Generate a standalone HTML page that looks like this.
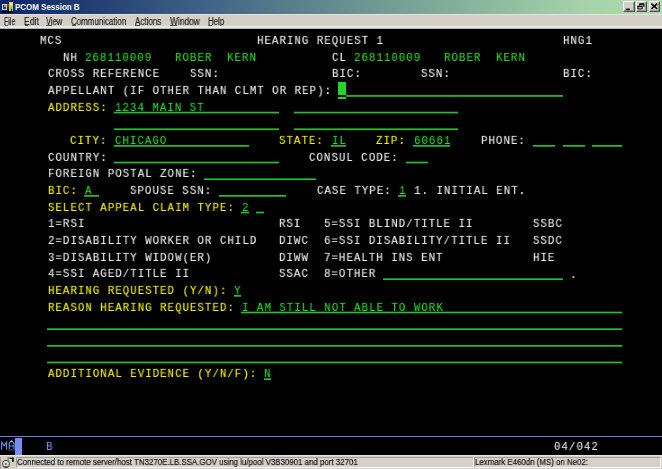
<!DOCTYPE html>
<html><head><meta charset="utf-8"><style>
html,body{margin:0;padding:0;}
body{width:662px;height:469px;overflow:hidden;position:relative;background:#000;font-family:"Liberation Sans",sans-serif;}
div{box-sizing:border-box;}
#title{position:absolute;left:0;top:0;width:662px;height:13.6px;
background:linear-gradient(to right,rgb(10,36,106) 0px,rgb(35,65,115) 100px,rgb(65,100,135) 210px,rgb(105,145,145) 350px,rgb(135,180,155) 470px,rgb(165,210,170) 580px,rgb(172,222,175) 662px);}
#ttext{position:absolute;left:15px;top:1.2px;color:#fff;font-weight:bold;font-size:9px;line-height:12px;white-space:nowrap;transform-origin:0 0;}
.btn{position:absolute;top:1.2px;width:11.5px;height:11px;background:#d4d0c8;
border-top:1px solid #fff;border-left:1px solid #fff;border-right:1px solid #505050;border-bottom:1px solid #505050;box-shadow:inset -1px -1px 0 #9a9a9a;}
#menu{position:absolute;left:0;top:13.6px;width:662px;height:15.4px;background:#d4d0c8;border-top:1.4px solid #e4e2dc;}
#menub{position:absolute;left:0;top:26.4px;width:662px;height:2.6px;background:linear-gradient(#e8e6e0,#e8e6e0 55%,#9a988f);}
.mi{position:absolute;will-change:transform;font-size:10px;line-height:12px;color:#202020;-webkit-text-stroke:0.2px #202020;white-space:nowrap;transform-origin:0 0;}
.mi u{text-decoration-thickness:1px;text-underline-offset:1px;}
.t{position:absolute;will-change:transform;transform:scale(var(--sx),0.9);transform-origin:0 0;--sx:0.9;--sw:0.1px;font-family:"Liberation Mono",monospace;font-size:12.0px;line-height:16px;letter-spacing:1.102px;white-space:pre;-webkit-text-stroke-width:var(--sw);}
.u{position:absolute;}
#status{position:absolute;left:0;top:454.5px;width:662px;height:14.5px;background:#d4d0c8;border-top:1px solid #e6e4de;}
.panel{position:absolute;top:1px;height:11px;border-top:1px solid #a09e96;border-left:1px solid #a09e96;border-right:1px solid #fff;border-bottom:1px solid #fff;}
.st{position:absolute;will-change:transform;top:1.4px;font-size:9px;line-height:11px;color:#0a0a14;-webkit-text-stroke:0.15px #0a0a14;white-space:nowrap;transform-origin:0 0;}
</style></head><body>
<div id="title">
<svg width="16" height="14" style="position:absolute;left:0;top:0" shape-rendering="crispEdges">
<rect x="1.5" y="3.5" width="5" height="6" fill="#d8ccb0"/>
<rect x="2.5" y="4.5" width="3" height="4" fill="#2040d0"/>
<rect x="3.5" y="4.5" width="2" height="2" fill="#30c060"/>
<rect x="6.5" y="4.2" width="2.5" height="2.4" fill="#d01818"/>
<rect x="9" y="2" width="4" height="9" fill="#d8d040"/>
<rect x="10" y="3" width="2" height="2" fill="#f0f0a0"/>
<rect x="10" y="6.5" width="2" height="2" fill="#70d070"/>
<rect x="10.5" y="9" width="1.5" height="2" fill="#101010"/>
<rect x="2" y="11" width="11" height="1.6" fill="#000"/>
</svg>
<div id="ttext" style="transform:scaleX(0.885)">PCOM Session B</div>
<div class="btn" style="left:623.2px"><svg width="12" height="12" style="position:absolute;left:-1px;top:-1px"><rect x="2.8" y="7.6" width="4.2" height="1.5" fill="#000"/></svg></div>
<div class="btn" style="left:635.6px"><svg width="12" height="12" style="position:absolute;left:-1px;top:-1px" fill="none" stroke="#000">
<path d="M3.6 3.1 H7.9 V6 M3.6 3.1 V4.6" stroke-width="1" />
<rect x="3.1" y="2.4" width="5.2" height="1.3" fill="#000" stroke="none"/>
<rect x="1.9" y="5.3" width="4.2" height="2.6" fill="#d4d0c8" stroke-width="0.9"/>
<rect x="1.5" y="4.8" width="5" height="1.3" fill="#000" stroke="none"/>
</svg></div>
<div class="btn" style="left:648.8px"><svg width="12" height="12" style="position:absolute;left:-1px;top:-1px"><path d="M2.4 2.6 L8.2 8.0 M8.2 2.6 L2.4 8.0" stroke="#000" stroke-width="1.6"/></svg></div>
</div>
<div id="menu">
<div style="position:absolute;left:4.5px;top:10.6px;width:3.7px;height:1px;background:#505050"></div><div class="mi" style="left:4.0px;top:1.8px;transform:scaleX(0.7072);">File</div><div style="position:absolute;left:24.5px;top:10.6px;width:3.6px;height:1px;background:#505050"></div><div class="mi" style="left:23.6px;top:1.8px;transform:scaleX(0.8532);">Edit</div><div style="position:absolute;left:46.2px;top:10.6px;width:5.5px;height:1px;background:#505050"></div><div class="mi" style="left:46.0px;top:1.8px;transform:scaleX(0.7535);">View</div><div style="position:absolute;left:71.6px;top:10.6px;width:4.5px;height:1px;background:#505050"></div><div class="mi" style="left:71.2px;top:1.8px;transform:scaleX(0.7945);">Communication</div><div style="position:absolute;left:135.4px;top:10.6px;width:4.5px;height:1px;background:#505050"></div><div class="mi" style="left:135.0px;top:1.8px;transform:scaleX(0.7988);">Actions</div><div style="position:absolute;left:169.8px;top:10.6px;width:7.2px;height:1px;background:#505050"></div><div class="mi" style="left:169.5px;top:1.8px;transform:scaleX(0.8375);">Window</div><div style="position:absolute;left:207.9px;top:10.6px;width:4.5px;height:1px;background:#505050"></div><div class="mi" style="left:207.5px;top:1.8px;transform:scaleX(0.7872);">Help</div>
</div>
<div id="menub"></div>
<div class="t" style="left:40.09px;top:34.10px;color:#ececec">MCS</div>
<div class="t" style="left:256.80px;top:34.10px;color:#ececec">HEARING REQUEST 1</div>
<div class="t" style="left:563.20px;top:34.10px;color:#ececec">HNG1</div>
<div class="t" style="left:62.50px;top:50.76px;color:#ececec">NH</div>
<div class="t" style="left:84.92px;top:50.76px;color:#2cd82c">268110009</div>
<div class="t" style="left:174.60px;top:50.76px;color:#2cd82c">ROBER</div>
<div class="t" style="left:226.91px;top:50.76px;color:#2cd82c">KERN</div>
<div class="t" style="left:331.53px;top:50.76px;color:#ececec">CL</div>
<div class="t" style="left:353.95px;top:50.76px;color:#2cd82c">268110009</div>
<div class="t" style="left:443.63px;top:50.76px;color:#2cd82c">ROBER</div>
<div class="t" style="left:495.94px;top:50.76px;color:#2cd82c">KERN</div>
<div class="t" style="left:47.56px;top:67.42px;color:#ececec">CROSS REFERENCE</div>
<div class="t" style="left:189.55px;top:67.42px;color:#ececec">SSN:</div>
<div class="t" style="left:331.53px;top:67.42px;color:#ececec">BIC:</div>
<div class="t" style="left:421.21px;top:67.42px;color:#ececec">SSN:</div>
<div class="t" style="left:563.20px;top:67.42px;color:#ececec">BIC:</div>
<div class="t" style="left:47.56px;top:84.08px;color:#ececec">APPELLANT (IF OTHER THAN CLMT OR REP):</div>
<div class="u" style="left:346px;top:95px;width:217px;height:2px;background:linear-gradient(rgb(35,177,40) 0px 1px,rgb(30,150,34) 1px 2px)"></div>
<div class="t" style="left:47.56px;top:100.74px;color:#f2f000">ADDRESS:</div>
<div class="t" style="left:114.82px;top:100.74px;color:#2cd82c">1234 MAIN ST</div>
<div class="u" style="left:114px;top:111px;width:165px;height:3px;background:linear-gradient(rgb(10,50,11) 0px 1px,rgb(38,192,44) 1px 2px,rgb(17,84,19) 2px 3px)"></div>
<div class="u" style="left:294px;top:111px;width:164px;height:3px;background:linear-gradient(rgb(10,50,11) 0px 1px,rgb(38,192,44) 1px 2px,rgb(17,84,19) 2px 3px)"></div>
<div class="u" style="left:114px;top:128px;width:165px;height:3px;background:linear-gradient(rgb(23,115,26) 0px 1px,rgb(38,192,44) 1px 2px,rgb(4,19,4) 2px 3px)"></div>
<div class="u" style="left:294px;top:128px;width:164px;height:3px;background:linear-gradient(rgb(23,115,26) 0px 1px,rgb(38,192,44) 1px 2px,rgb(4,19,4) 2px 3px)"></div>
<div class="t" style="left:69.98px;top:134.06px;color:#f2f000">CITY:</div>
<div class="t" style="left:114.82px;top:134.06px;color:#2cd82c">CHICAGO</div>
<div class="u" style="left:114px;top:145px;width:135px;height:2px;background:linear-gradient(rgb(36,180,41) 0px 1px,rgb(29,146,33) 1px 2px)"></div>
<div class="t" style="left:279.22px;top:134.06px;color:#f2f000">STATE:</div>
<div class="t" style="left:331.53px;top:134.06px;color:#2cd82c">IL</div>
<div class="u" style="left:331px;top:145px;width:15px;height:2px;background:linear-gradient(rgb(36,180,41) 0px 1px,rgb(29,146,33) 1px 2px)"></div>
<div class="t" style="left:376.37px;top:134.06px;color:#f2f000">ZIP:</div>
<div class="t" style="left:413.74px;top:134.06px;color:#2cd82c">60661</div>
<div class="u" style="left:413px;top:145px;width:37px;height:2px;background:linear-gradient(rgb(36,180,41) 0px 1px,rgb(29,146,33) 1px 2px)"></div>
<div class="t" style="left:480.99px;top:134.06px;color:#ececec">PHONE:</div>
<div class="u" style="left:533px;top:145px;width:22px;height:2px;background:linear-gradient(rgb(36,180,41) 0px 1px,rgb(29,146,33) 1px 2px)"></div>
<div class="u" style="left:563px;top:145px;width:22px;height:2px;background:linear-gradient(rgb(36,180,41) 0px 1px,rgb(29,146,33) 1px 2px)"></div>
<div class="u" style="left:592px;top:145px;width:30px;height:2px;background:linear-gradient(rgb(36,180,41) 0px 1px,rgb(29,146,33) 1px 2px)"></div>
<div class="t" style="left:47.56px;top:150.72px;color:#ececec">COUNTRY:</div>
<div class="u" style="left:114px;top:161px;width:165px;height:3px;background:linear-gradient(rgb(11,54,12) 0px 1px,rgb(38,192,44) 1px 2px,rgb(16,81,18) 2px 3px)"></div>
<div class="t" style="left:309.11px;top:150.72px;color:#ececec">CONSUL CODE:</div>
<div class="u" style="left:406px;top:161px;width:22px;height:3px;background:linear-gradient(rgb(11,54,12) 0px 1px,rgb(38,192,44) 1px 2px,rgb(16,81,18) 2px 3px)"></div>
<div class="t" style="left:47.56px;top:167.38px;color:#ececec">FOREIGN POSTAL ZONE:</div>
<div class="u" style="left:204px;top:178px;width:112px;height:3px;background:linear-gradient(rgb(24,119,27) 0px 1px,rgb(38,192,44) 1px 2px,rgb(3,15,4) 2px 3px)"></div>
<div class="t" style="left:47.56px;top:184.04px;color:#f2f000">BIC:</div>
<div class="t" style="left:84.92px;top:184.04px;color:#2cd82c">A</div>
<div class="u" style="left:84px;top:195px;width:15px;height:2px;background:linear-gradient(rgb(36,184,42) 0px 1px,rgb(28,142,33) 1px 2px)"></div>
<div class="t" style="left:129.76px;top:184.04px;color:#ececec">SPOUSE SSN:</div>
<div class="u" style="left:219px;top:195px;width:67px;height:2px;background:linear-gradient(rgb(36,184,42) 0px 1px,rgb(28,142,33) 1px 2px)"></div>
<div class="t" style="left:316.59px;top:184.04px;color:#ececec">CASE TYPE:</div>
<div class="t" style="left:398.79px;top:184.04px;color:#2cd82c">1</div>
<div class="u" style="left:398px;top:195px;width:8px;height:2px;background:linear-gradient(rgb(36,184,42) 0px 1px,rgb(28,142,33) 1px 2px)"></div>
<div class="t" style="left:413.74px;top:184.04px;color:#ececec">1. INITIAL ENT.</div>
<div class="t" style="left:47.56px;top:200.70px;color:#f2f000">SELECT APPEAL CLAIM TYPE:</div>
<div class="t" style="left:241.86px;top:200.70px;color:#2cd82c">2</div>
<div class="u" style="left:241px;top:211px;width:8px;height:3px;background:linear-gradient(rgb(11,58,13) 0px 1px,rgb(38,192,44) 1px 2px,rgb(15,77,18) 2px 3px)"></div>
<div class="u" style="left:256px;top:211px;width:8px;height:3px;background:linear-gradient(rgb(11,58,13) 0px 1px,rgb(38,192,44) 1px 2px,rgb(15,77,18) 2px 3px)"></div>
<div class="t" style="left:47.56px;top:217.36px;color:#ececec">1=RSI</div>
<div class="t" style="left:279.22px;top:217.36px;color:#ececec">RSI</div>
<div class="t" style="left:324.06px;top:217.36px;color:#ececec">5=SSI BLIND/TITLE II</div>
<div class="t" style="left:533.30px;top:217.36px;color:#ececec">SSBC</div>
<div class="t" style="left:47.56px;top:234.02px;color:#ececec">2=DISABILITY WORKER OR CHILD</div>
<div class="t" style="left:279.22px;top:234.02px;color:#ececec">DIWC</div>
<div class="t" style="left:324.06px;top:234.02px;color:#ececec">6=SSI DISABILITY/TITLE II</div>
<div class="t" style="left:533.30px;top:234.02px;color:#ececec">SSDC</div>
<div class="t" style="left:47.56px;top:250.68px;color:#ececec">3=DISABILITY WIDOW(ER)</div>
<div class="t" style="left:279.22px;top:250.68px;color:#ececec">DIWW</div>
<div class="t" style="left:324.06px;top:250.68px;color:#ececec">7=HEALTH INS ENT</div>
<div class="t" style="left:533.30px;top:250.68px;color:#ececec">HIE</div>
<div class="t" style="left:47.56px;top:267.34px;color:#ececec">4=SSI AGED/TITLE II</div>
<div class="t" style="left:279.22px;top:267.34px;color:#ececec">SSAC</div>
<div class="t" style="left:324.06px;top:267.34px;color:#ececec">8=OTHER</div>
<div class="u" style="left:383px;top:278px;width:180px;height:3px;background:linear-gradient(rgb(25,127,29) 0px 1px,rgb(38,192,44) 1px 2px,rgb(2,8,2) 2px 3px)"></div>
<div class="t" style="left:569.67px;top:268.04px;color:#ececec">.</div>
<div class="t" style="left:47.56px;top:284.00px;color:#f2f000">HEARING REQUESTED (Y/N):</div>
<div class="t" style="left:234.38px;top:284.00px;color:#2cd82c">Y</div>
<div class="u" style="left:234px;top:295px;width:7px;height:2px;background:linear-gradient(rgb(38,192,44) 0px 1px,rgb(27,134,31) 1px 2px)"></div>
<div class="t" style="left:47.56px;top:300.66px;color:#f2f000">REASON HEARING REQUESTED:</div>
<div class="t" style="left:241.86px;top:300.66px;color:#2cd82c">I AM STILL NOT ABLE TO WORK</div>
<div class="u" style="left:241px;top:311px;width:381px;height:3px;background:linear-gradient(rgb(13,65,15) 0px 1px,rgb(38,192,44) 1px 2px,rgb(14,69,16) 2px 3px)"></div>
<div class="u" style="left:47px;top:328px;width:575px;height:3px;background:linear-gradient(rgb(26,131,30) 0px 1px,rgb(38,192,44) 1px 2px,rgb(1,4,1) 2px 3px)"></div>
<div class="u" style="left:47px;top:344px;width:575px;height:3px;background:linear-gradient(rgb(1,4,1) 0px 1px,rgb(38,192,44) 1px 2px,rgb(26,131,30) 2px 3px)"></div>
<div class="u" style="left:47px;top:361px;width:575px;height:3px;background:linear-gradient(rgb(14,69,16) 0px 1px,rgb(38,192,44) 1px 2px,rgb(13,65,15) 2px 3px)"></div>
<div class="t" style="left:47.56px;top:367.30px;color:#f2f000">ADDITIONAL EVIDENCE (Y/N/F):</div>
<div class="t" style="left:264.28px;top:367.30px;color:#2cd82c">N</div>
<div class="u" style="left:264px;top:378px;width:7px;height:2px;background:linear-gradient(rgb(27,134,31) 0px 1px,rgb(38,192,44) 1px 2px)"></div>
<div style="position:absolute;left:338.34px;top:81.88px;width:7.47px;height:13px;background:#24d62a"></div>
<div style="position:absolute;left:338.34px;top:96.88px;width:7.47px;height:2px;background:#24d62a"></div>
<div style="position:absolute;left:0;top:436px;width:662px;height:1.2px;background:#6a7ed8"></div>
<svg width="16" height="16" style="position:absolute;left:0;top:438px" fill="none" stroke="#7488ea" stroke-width="1.15">
<path d="M1.6 11.7 V4.2 L4.1 7.6 L6.6 4.2 V11.7"/>
<path d="M9.2 11 V5.4 L11.6 2.5 L14 5.4 V11 M9.2 8 H14"/>
<path d="M8.4 12 H15" stroke-width="0.8" stroke="#5a6ab8"/>
</svg>
<div style="position:absolute;left:14.9px;top:438px;width:7.4px;height:16.5px;background:#7a8cf0"></div>
<div class="t" style="left:45.8px;top:439.6px;color:#7a8cf0">B</div>
<div class="t" style="left:554px;top:439.8px;color:#e6e6e6">04/042</div>
<div id="status">
<div style="position:absolute;left:0;top:1px;width:1px;height:12px;background:#a09e96"></div>
<svg width="16" height="13" style="position:absolute;left:0;top:0">
<circle cx="6" cy="7.8" r="3.5" fill="#e4e4e4" stroke="#3a3a3a" stroke-width="1"/>
<path d="M3.2 10.6 A3.5 3.5 0 0 0 8.8 10.6 Z" fill="#303030"/>
<circle cx="5.8" cy="8" r="1" fill="#505050"/>
<rect x="7.3" y="1" width="1.7" height="4.2" fill="#8a8a8a"/>
<rect x="9.4" y="1.6" width="4.2" height="1.3" fill="#202020"/>
<rect x="12" y="1.6" width="1.8" height="4.4" fill="#202020"/>
</svg>
<div class="panel" style="left:15.5px;width:458px"></div>
<div class="panel" style="left:474px;width:187px"></div>
<div class="st" style="left:17.2px;transform:scaleX(0.877)">Connected to remote server/host TN3270E.LB.SSA.GOV using lu/pool V3B30901 and port 32701</div>
<div class="st" style="left:475.4px;transform:scaleX(0.876)">Lexmark E460dn (MS) on Ne02:</div>
</div>
</body></html>
